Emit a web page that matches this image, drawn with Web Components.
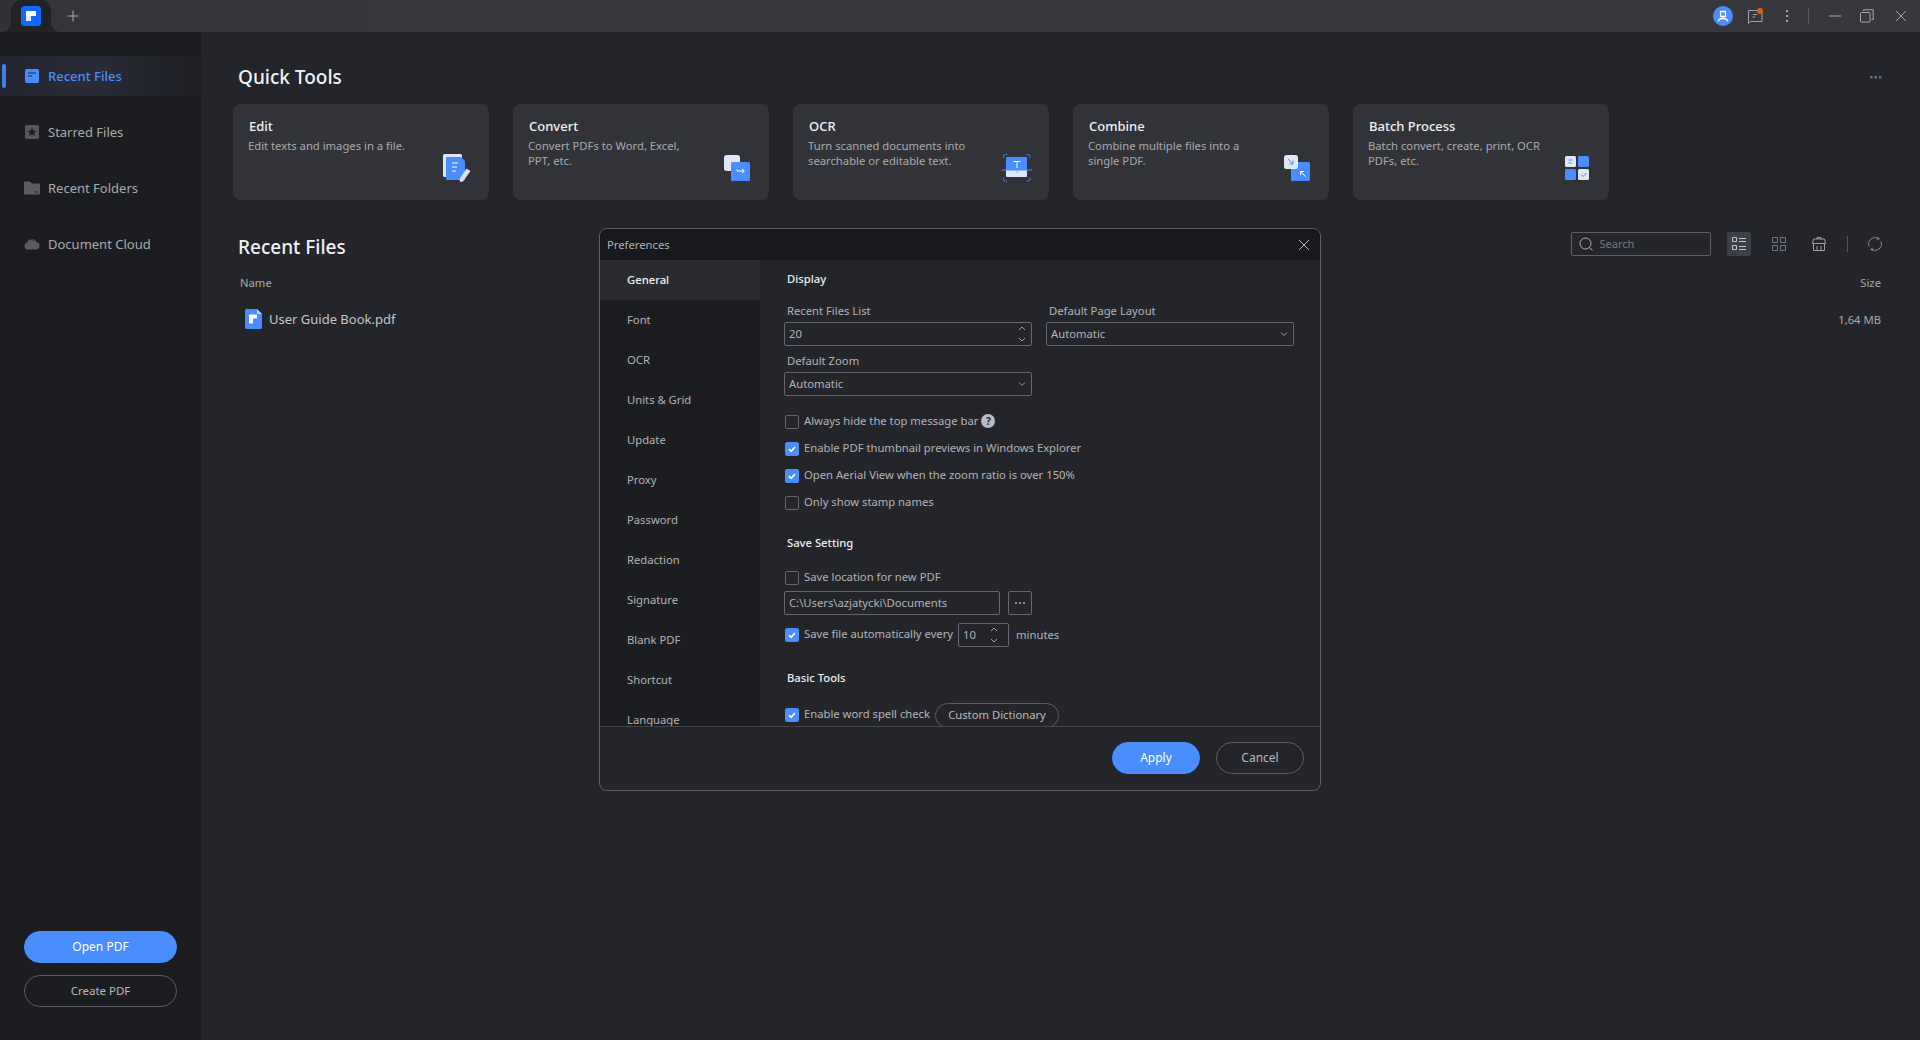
<!DOCTYPE html>
<html lang="en">
<head>
<meta charset="utf-8">
<title>Preferences</title>
<style>
  html, body { margin: 0; height: 100%; }
  body { font-family: "Noto Sans", "Open Sans", sans-serif; background: #24252a; overflow: hidden; }
</style>
</head>
<body>
<pdf-app></pdf-app>

<script>
const FONT = '"Noto Sans", "Open Sans", sans-serif';
function def(name, css, html) {
  const t = document.createElement('template');
  t.innerHTML = `<style>${css}</style>${html}`;
  customElements.define(name, class extends HTMLElement {
    constructor() {
      super();
      const root = this.attachShadow({ mode: 'open' });
      root.appendChild(t.content.cloneNode(true));
      root.querySelectorAll('[data-attr]').forEach(n => {
        n.textContent = this.getAttribute(n.dataset.attr) || '';
      });
    }
  });
}

/* ---------- small controls ---------- */
def('check-box', `
  :host { display:flex; align-items:center; height:14px; gap:5px; font-size:11.25px; line-height:14px; color:#b3b4b8; white-space:nowrap; }
  .box { width:14px; height:14px; box-sizing:border-box; border:1px solid #66676d; border-radius:2px; flex:none; display:block; }
  :host([on]) .box { background:#4a8dff; border-color:#4a8dff; }
  svg { display:none; width:12px; height:12px; }
  :host([on]) svg { display:block; }
  .t { display:flex; align-items:center; gap:3px; margin-top:-2px; }
`, `<span class="box"><svg viewBox="0 0 12 12"><path d="M3 6.2 5.1 8.3 9 4" fill="none" stroke="#fff" stroke-width="1.7"/></svg></span><span class="t"><slot></slot></span>`);

def('text-field', `
  :host { display:flex; align-items:center; box-sizing:border-box; height:24px; border:1px solid #66676d; border-radius:2px; padding:0 4px 1px; font-size:11.25px; color:#b3b4b8; white-space:nowrap; justify-content:space-between; }
  ::slotted(svg) { flex:none; }
`, `<span data-attr="value"></span><slot></slot>`);

def('form-label', `
  :host { display:block; font-size:11.25px; line-height:16px; padding-bottom:2px; color:#b3b4b8; padding-left:3px; white-space:nowrap; }
`, `<slot></slot>`);

def('section-title', `
  :host { display:block; font-size:11.25px; font-weight:500; line-height:16px; padding-bottom:2px; color:#eeeff1; padding-left:3px; }
`, `<slot></slot>`);

def('pill-button', `
  :host { display:flex; align-items:center; justify-content:center; box-sizing:border-box; border-radius:16px; border:1px solid #5d5e64; color:#b9babd; font-size:12px; height:32px; padding-bottom:2px; white-space:nowrap; }
  :host([primary]) { background:#4a8dff; border-color:#4a8dff; color:#fff; }
`, `<slot></slot>`);

/* ---------- sidebar ---------- */
def('nav-item', `
  :host { display:flex; align-items:center; height:40px; margin-bottom:16px; padding-left:24px; gap:8px; font-size:13px; color:#a9aaae; white-space:nowrap; position:relative; }
  :host([active]) { color:#4a8dff; font-weight:500; background:linear-gradient(90deg,#23262f 0%,#292c36 45%,#1e1f24 100%); }
  :host([active])::before { content:""; position:absolute; left:2px; top:8px; width:4px; height:24px; border-radius:2px; background:#3c7ff0; }
  .i { display:flex; width:16px; height:16px; flex:none; }
`, `<span class="i"><slot name="icon"></slot></span><slot></slot>`);

def('app-sidebar', `
  :host { display:flex; flex-direction:column; width:201px; flex:none; background:#1c1d21; box-sizing:border-box; padding:24px 0 33px; }
  .btns { margin-top:auto; padding:0 24px; display:flex; flex-direction:column; gap:12px; }
  .small { font-size:11.5px; }
`, `<slot></slot><div class="btns">
  <pill-button primary>Open PDF</pill-button>
  <pill-button class="small">Create PDF</pill-button>
</div>`);

/* ---------- title bar ---------- */
def('app-titlebar', `
  :host { display:flex; height:32px; flex:none; background:#212226; }
  .l { width:11px; background:#313236; border-bottom-right-radius:9px; }
  .tabwrap { width:40px; background:linear-gradient(90deg,#323337,#343539); }
  .tab { height:32px; background:#212226; border-radius:10px 10px 0 0; display:flex; align-items:center; justify-content:center; }
  .r { flex:1; background:linear-gradient(90deg,#343539,#37383c 30%); border-bottom-left-radius:9px; display:flex; align-items:center; padding-right:3px; }
  .plus { margin-left:14px; width:16px; height:16px; display:block; }
  .sp { flex:1; }
  .cell { width:32px; height:32px; display:flex; align-items:center; justify-content:center; flex:none; }
  .div { width:1px; height:16px; background:#5b5c61; margin:0 10px 0 5px; flex:none; }
  .gap { margin-left:2px; }
`, `<div class="l"></div>
<div class="tabwrap"><div class="tab">
  <svg width="20" height="20" viewBox="0 0 20 20"><rect width="20" height="20" rx="3.5" fill="#0f6bff"/><path d="M5 5h10v5H10v5H5z" fill="#fff"/><path d="M5 10h5v5H5z" fill="#dfe9ff"/></svg>
</div></div>
<div class="r">
  <svg class="plus" viewBox="0 0 16 16"><path d="M8 2.5v11M2.5 8h11" stroke="#a9aaae" stroke-width="1"/></svg>
  <span class="sp"></span>
  <span class="cell"><svg width="20" height="20" viewBox="0 0 20 20"><circle cx="10" cy="10" r="10" fill="#4a8dff"/><path d="M7.5 5.5h5v5h-5z M10 10.5v1.5M5.5 15.5c0-2 2-3 4.500-3s4.500 1 4.500 3" fill="none" stroke="#fff" stroke-width="1.300"/></svg></span>
  <span class="cell"><svg width="20" height="20" viewBox="0 0 20 20"><path d="M3.500 4.500h13.500v11H5.500L3.500 17.500z" fill="none" stroke="#a3a4a8" stroke-width="1"/><path d="M8 8.500h4M7.500 11h2.500" stroke="#a3a4a8"/><circle cx="15" cy="5" r="3" fill="#f5520c"/></svg></span>
  <span class="cell"><svg width="4" height="14" viewBox="0 0 4 14"><path d="M1 1h2v2H1zM1 6h2v2H1zM1 11h2v2H1z" fill="#a9aaae"/></svg></span>
  <span class="div"></span>
  <span class="cell"><svg width="14" height="2" viewBox="0 0 14 2"><path d="M1 1h12" stroke="#a9aaae"/></svg></span>
  <span class="cell"><svg width="14" height="14" viewBox="0 0 14 14"><rect x=".5" y="3.500" width="9.500" height="9.500" rx="1" fill="none" stroke="#a9aaae"/><path d="M3.500 2V.8h9.700v9.700H11.500" fill="none" stroke="#a9aaae"/></svg></span>
  <span class="cell gap"><svg width="12" height="12" viewBox="0 0 12 12"><path d="M1 1l10 10M11 1L1 11" stroke="#a9aaae"/></svg></span>
</div>`);

/* ---------- main area ---------- */
def('tool-card', `
  :host { display:grid; grid-template-columns:1fr 32px; box-sizing:border-box; width:256px; height:96px; background:#323338; border-radius:8px; padding:13px 16px 16px 15px; }
  .t { font-size:13px; font-weight:500; line-height:18px; color:#f0f1f3; padding-left:1px; }
  .d { font-size:11.25px; line-height:15px; color:#a9aaae; margin-top:3px; white-space:nowrap; }
  .ic { grid-column:2; grid-row:1; align-self:end; height:32px; }
  .tx { grid-column:1; grid-row:1; }
`, `<div class="tx"><div class="t" data-attr="title"></div><div class="d"><slot></slot></div></div><div class="ic"><slot name="icon"></slot></div>`);

def('section-row', `
  :host { display:flex; align-items:flex-start; justify-content:space-between; }
  h2 { margin:0; font-size:19px; font-weight:500; line-height:28px; color:#f1f2f4; padding-left:5px; }
  :host([low]) h2 { padding-top:1px; }
`, `<h2 data-attr="title"></h2><slot></slot>`);

def('file-toolbar', `
  :host { display:flex; align-items:center; height:24px; }
  .search { width:140px; height:24px; box-sizing:border-box; border:1px solid #5d5e64; border-radius:2px; display:flex; align-items:center; padding:0 0 1px 7px; gap:7px; font-size:11px; color:#77787d; margin-right:16px; }
  .b { width:24px; height:24px; display:flex; align-items:center; justify-content:center; flex:none; border-radius:2px; }
  .on { background:#3d3f47; }
  .m { margin-left:16px; }
  .div { width:1px; height:16px; background:#55565c; margin:0 15.500px 0 16px; flex:none; }
`, `<div class="search">
  <svg width="14" height="14" viewBox="0 0 14 14"><circle cx="6.500" cy="6.500" r="5.500" fill="none" stroke="#b3b4b8"/><path d="M10.500 10.500l3 3" stroke="#b3b4b8"/></svg>
  <span>Search</span></div>
<span class="b on"><svg width="14" height="14" viewBox="0 0 14 14"><path d="M.5 .5h4v4h-4zM.5 8.500h4v4h-4zM7 1.500h7M7 4.500h7M7 9.500h7M7 12.500h7" fill="none" stroke="#c3c5cc"/></svg></span>
<span class="b m"><svg width="14" height="14" viewBox="0 0 14 14"><path d="M.5 .5h5v5h-5zM8.500 .5h5v5h-5zM.5 8.500h5v5h-5zM8.500 8.500h5v5h-5z" fill="none" stroke="#6f7388"/></svg></span>
<span class="b m"><svg width="14" height="14" viewBox="0 0 14 14"><path d="M5 2V.5h4V2M1.500 2h11l1 4.500h-13zM1.500 6.500v7h11v-7M5 9v4.500M9 9v4.500" fill="none" stroke="#9ea0a6"/></svg></span>
<span class="div"></span>
<span class="b"><svg width="16" height="16" viewBox="0 0 16 16"><path d="M2 10.500A6.500 6.500 0 0 1 11.500 2.500M14 5.500A6.500 6.500 0 0 1 4.500 13.500" fill="none" stroke="#85868c"/><path d="M10 1l3 1.500-2.500 2zM6 15l-3-1.500 2.500-2z" fill="#85868c"/></svg></span>`);

def('file-row', `
  :host { display:flex; align-items:center; height:20px; font-size:13px; color:#c6c7ca; margin-top:17px; padding-right:6px; }
  svg { margin:0 7px 0 12px; flex:none; }
  .s { margin-left:auto; font-size:11.25px; color:#a9aaae; }
`, `<svg width="17" height="20" viewBox="0 0 17 20"><path d="M1.500 0H12l5 5v13.500a1.500 1.500 0 0 1-1.500 1.500h-14A1.500 1.500 0 0 1 0 18.500v-17A1.500 1.500 0 0 1 1.500 0z" fill="#4a8dff"/><path d="M12 0l5 5h-5z" fill="#bcd3ff"/><path d="M4 5.500h8v4H8v5H4z" fill="#fff"/></svg>
<span data-attr="name"></span><span class="s" data-attr="size"></span>`);

def('app-main', `
  :host { display:flex; flex-direction:column; flex:1; box-sizing:border-box; padding:31px 33px 0 32px; background:#24252a; min-width:0; }
  .more { margin:13px 5px 0 0; display:block; }
  .cards { display:flex; gap:24px; margin-top:13px; }
  .gap { margin-top:32px; }
  .cols { display:flex; justify-content:space-between; font-size:11.25px; line-height:18px; color:#a9aaae; margin-top:13px; padding:0 6px 0 7px; }
`, `<section-row title="Quick Tools"><svg class="more" width="12" height="3" viewBox="0 0 12 3"><path d="M0 0h2.500v2.500H0zM4.500 0h2.500v2.500H4.500zM9 0h2.500v2.500H9z" fill="#6a6f8a"/></svg></section-row>
<div class="cards"><slot></slot></div>
<section-row class="gap" low title="Recent Files"><file-toolbar></file-toolbar></section-row>
<div class="cols"><span>Name</span><span>Size</span></div>
<file-row name="User Guide Book.pdf" size="1,64 MB"></file-row>`);

/* ---------- preferences dialog ---------- */
const arrows = `<svg width="10" height="18" viewBox="0 0 10 18"><path d="M2 5l3-3 3 3M2 13l3 3 3-3" fill="none" stroke="#a0a1a6" stroke-width="1"/></svg>`;
const chev = `<svg width="10" height="6" viewBox="0 0 10 6"><path d="M2 1.500l3 3 3-3" fill="none" stroke="#a0a1a6" stroke-width="1"/></svg>`;

def('prefs-nav', `
  :host { display:block; width:160px; flex:none; background:#1c1d21; overflow:hidden; }
  div { height:40px; line-height:40px; padding-left:27px; font-size:11.25px; color:#b3b4b8; }
  .on { background:#2a2c31; color:#f0f1f3; font-weight:500; }
`, `<div class="on">General</div><div>Font</div><div>OCR</div><div>Units &amp; Grid</div><div>Update</div><div>Proxy</div><div>Password</div><div>Redaction</div><div>Signature</div><div>Blank PDF</div><div>Shortcut</div><div>Language</div>`);

def('prefs-form', `
  :host { display:block; flex:1; padding:11px 0 0 24px; overflow:hidden; font-size:11.25px; color:#b3b4b8; }
  .two { display:flex; gap:14px; margin-top:14px; }
  .f { width:248px; }
  text-field { margin-top:1px; }
  .mt7 { margin-top:7px; }
  .checks { display:flex; flex-direction:column; gap:13px; margin-top:19px; padding-left:1px; }
  .help { display:inline-flex; width:14px; height:14px; border-radius:50%; background:#b9bcc8; color:#24252a; font-size:10px; font-weight:700; align-items:center; justify-content:center; }
  .s2 { margin-top:25px; }
  .c1 { margin-top:18px; margin-left:1px; }
  .path { display:flex; gap:8px; margin-top:6px; }
  .path text-field { margin-top:0; width:216px; }
  .dots { width:24px; height:24px; box-sizing:border-box; border:1px solid #66676d; border-radius:2px; display:flex; align-items:center; justify-content:center; flex:none; }
  .auto { display:flex; align-items:center; height:24px; margin-top:8px; margin-left:1px; }
  .auto text-field { margin:0 7px 0 5px; width:51px; padding-right:9px; }
  .mins { margin-top:-2px; }
  .s3 { margin-top:23px; }
  .s3b { margin-top:15px; display:flex; align-items:center; height:24px; margin-left:1px; gap:5px; }
  pill-button { width:124px; height:25px; font-size:11.25px; }
`, `<section-title>Display</section-title>
<div class="two">
  <div class="f"><form-label>Recent Files List</form-label><text-field value="20">${arrows}</text-field></div>
  <div class="f"><form-label>Default Page Layout</form-label><text-field value="Automatic">${chev}</text-field></div>
</div>
<div class="f mt7"><form-label>Default Zoom</form-label><text-field value="Automatic">${chev}</text-field></div>
<div class="checks">
  <check-box>Always hide the top message bar <span class="help">?</span></check-box>
  <check-box on>Enable PDF thumbnail previews in Windows Explorer</check-box>
  <check-box on>Open Aerial View when the zoom ratio is over 150%</check-box>
  <check-box>Only show stamp names</check-box>
</div>
<section-title class="s2">Save Setting</section-title>
<check-box class="c1">Save location for new PDF</check-box>
<div class="path">
  <text-field value="C:\\Users\\azjatycki\\Documents"></text-field>
  <span class="dots"><svg width="12" height="2" viewBox="0 0 12 2"><path d="M1 0h2v2H1zM5 0h2v2H5zM9 0h2v2H9z" fill="#8d8e94"/></svg></span>
</div>
<div class="auto"><check-box on>Save file automatically every</check-box><text-field value="10">${arrows}</text-field><span class="mins">minutes</span></div>
<section-title class="s3">Basic Tools</section-title>
<div class="s3b"><check-box on>Enable word spell check</check-box><pill-button>Custom Dictionary</pill-button></div>`);

def('prefs-dialog', `
  :host { position:absolute; left:599px; top:228px; width:722px; height:563px; box-sizing:border-box; display:flex; flex-direction:column; border:1px solid #5e5f65; border-radius:8px; background:#24252a; overflow:hidden; z-index:5; }
  header { display:flex; align-items:center; justify-content:space-between; height:31px; flex:none; background:#18191d; padding:0 10px 0 7px; font-size:11.25px; color:#aeafb3; }
  .body { flex:1; display:flex; min-height:0; }
  footer { display:flex; justify-content:flex-end; gap:16px; height:64px; box-sizing:border-box; flex:none; border-top:1px solid #44454a; padding:15px 16px 0 0; }
  pill-button { width:88px; }
`, `<header><span>Preferences</span><svg width="12" height="12" viewBox="0 0 12 12"><path d="M1 1l10 10M11 1L1 11" stroke="#b3b4b8"/></svg></header>
<div class="body"><prefs-nav></prefs-nav><prefs-form></prefs-form></div>
<footer><pill-button primary>Apply</pill-button><pill-button>Cancel</pill-button></footer>`);

def('pdf-app', `
  :host { display:flex; flex-direction:column; height:1040px; width:1920px; position:relative; font-family:${FONT}; }
  .row { display:flex; flex:1; min-height:0; }
`, `<app-titlebar></app-titlebar>
<div class="row">
  <app-sidebar>
    <nav-item active><svg slot="icon" width="16" height="16" viewBox="0 0 16 16"><rect x="1" y="1" width="14" height="14" rx="2" fill="#4a8dff"/><path d="M4 5h8M4 8h4" stroke="#24252a" stroke-width="1"/></svg>Recent Files</nav-item>
    <nav-item><svg slot="icon" width="16" height="16" viewBox="0 0 16 16"><rect x="1" y="1" width="14" height="14" rx="2" fill="#56575f"/><path d="M8 3.800l1.300 2.700 2.900.4-2.100 2 .5 2.900L8 10.400l-2.600 1.400.5-2.900-2.100-2 2.900-.4z" fill="#1c1d21"/></svg>Starred Files</nav-item>
    <nav-item><svg slot="icon" width="16" height="16" viewBox="0 0 16 16"><path d="M0 2.500A1 1 0 0 1 1 1.500h4.500L8 3.500h7a1 1 0 0 1 1 1v9a1 1 0 0 1-1 1H1a1 1 0 0 1-1-1z" fill="#5a5b63"/><path d="M11 12h3" stroke="#1c1d21"/></svg>Recent Folders</nav-item>
    <nav-item><svg slot="icon" width="16" height="16" viewBox="0 0 16 16"><path d="M4 13.500a3.500 3.500 0 0 1-.8-6.900A5 5 0 0 1 12.500 6a3.800 3.800 0 0 1-.2 7.500z" fill="#5a5b63"/><path d="M6 3.500c1.500-.6 3 0 3.800 1.500" fill="none" stroke="#1c1d21" stroke-width=".7"/></svg>Document Cloud</nav-item>
  </app-sidebar>
  <app-main>
    <tool-card title="Edit">Edit texts and images in a file.
      <svg slot="icon" width="32" height="32" viewBox="0 0 32 32"><rect x="2" y="2" width="19" height="23" rx="1.500" fill="#dde6fb"/><path d="M6 5h14l4 4v19H6a1 1 0 0 1-1-1V6a1 1 0 0 1 1-1z" fill="#4a8dff"/><path d="M11 11h6M11 15h5M11 19h4" stroke="#fff"/><path d="M25.500 16.500l4 2.500-7.500 10.500-3 .5-.5-3z" fill="#d6e2fa"/></svg>
    </tool-card>
    <tool-card title="Convert">Convert PDFs to Word, Excel,<br>PPT, etc.
      <svg slot="icon" width="32" height="32" viewBox="0 0 32 32"><rect x="3" y="3" width="16" height="16" rx="2.500" fill="#dfe7fb"/><rect x="10" y="10" width="19" height="19" rx="1.500" fill="#4a8dff"/><path d="M16 17.500v1.500h7M21 17l2.300 2L21 21" fill="none" stroke="#fff" stroke-width="1"/></svg>
    </tool-card>
    <tool-card title="OCR">Turn scanned documents into<br>searchable or editable text.
      <svg slot="icon" width="32" height="32" viewBox="0 0 32 32"><path d="M2.500 6V4.500a2 2 0 0 1 2-2H6M25.500 2.500H27a2 2 0 0 1 2 2V6M2.500 25.500V27a2 2 0 0 0 2 2H6M25.500 29H27a2 2 0 0 0 2-2v-1.500" fill="none" stroke="#3f7fe6"/><path d="M5 18V6a1 1 0 0 1 1-1h19a1 1 0 0 1 1 1v12z" fill="#4a8dff"/><path d="M5 18h21v6a1 1 0 0 1-1 1H6a1 1 0 0 1-1-1z" fill="#dfe7fb"/><path d="M1 18h30" stroke="#4a8dff"/><path d="M12.500 9.500h7M16 9.500v6.500" stroke="#fff"/><path d="M16 19v2" stroke="#8ca8dd"/></svg>
    </tool-card>
    <tool-card title="Combine">Combine multiple files into a<br>single PDF.
      <svg slot="icon" width="32" height="32" viewBox="0 0 32 32"><rect x="10" y="10" width="19" height="19" rx="1.500" fill="#4a8dff"/><rect x="3" y="3" width="14" height="14" rx="2.500" fill="#dfe7fb"/><path d="M7 7l5 5M12 8.500V12H8.500" fill="none" stroke="#4a8dff" stroke-width="1"/><path d="M24.500 24.500l-5-5M19.500 23v-3.500H23" fill="none" stroke="#fff" stroke-width="1"/></svg>
    </tool-card>
    <tool-card title="Batch Process">Batch convert, create, print, OCR<br>PDFs, etc.
      <svg slot="icon" width="32" height="32" viewBox="0 0 32 32"><rect x="4" y="4" width="11" height="11" rx="1.500" fill="#dfe7fb"/><rect x="17" y="4" width="11" height="11" rx="1.500" fill="#4a8dff"/><rect x="4" y="17" width="11" height="11" rx="1.500" fill="#4a8dff"/><rect x="17" y="17" width="11" height="11" rx="1.500" fill="#dfe7fb"/><path d="M7.500 8h4M7.500 11h3M20 22.500l2 2 3.500-3.500" fill="none" stroke="#4a8dff"/></svg>
    </tool-card>
  </app-main>
</div>
<prefs-dialog></prefs-dialog>`);
</script>
</body>
</html>
